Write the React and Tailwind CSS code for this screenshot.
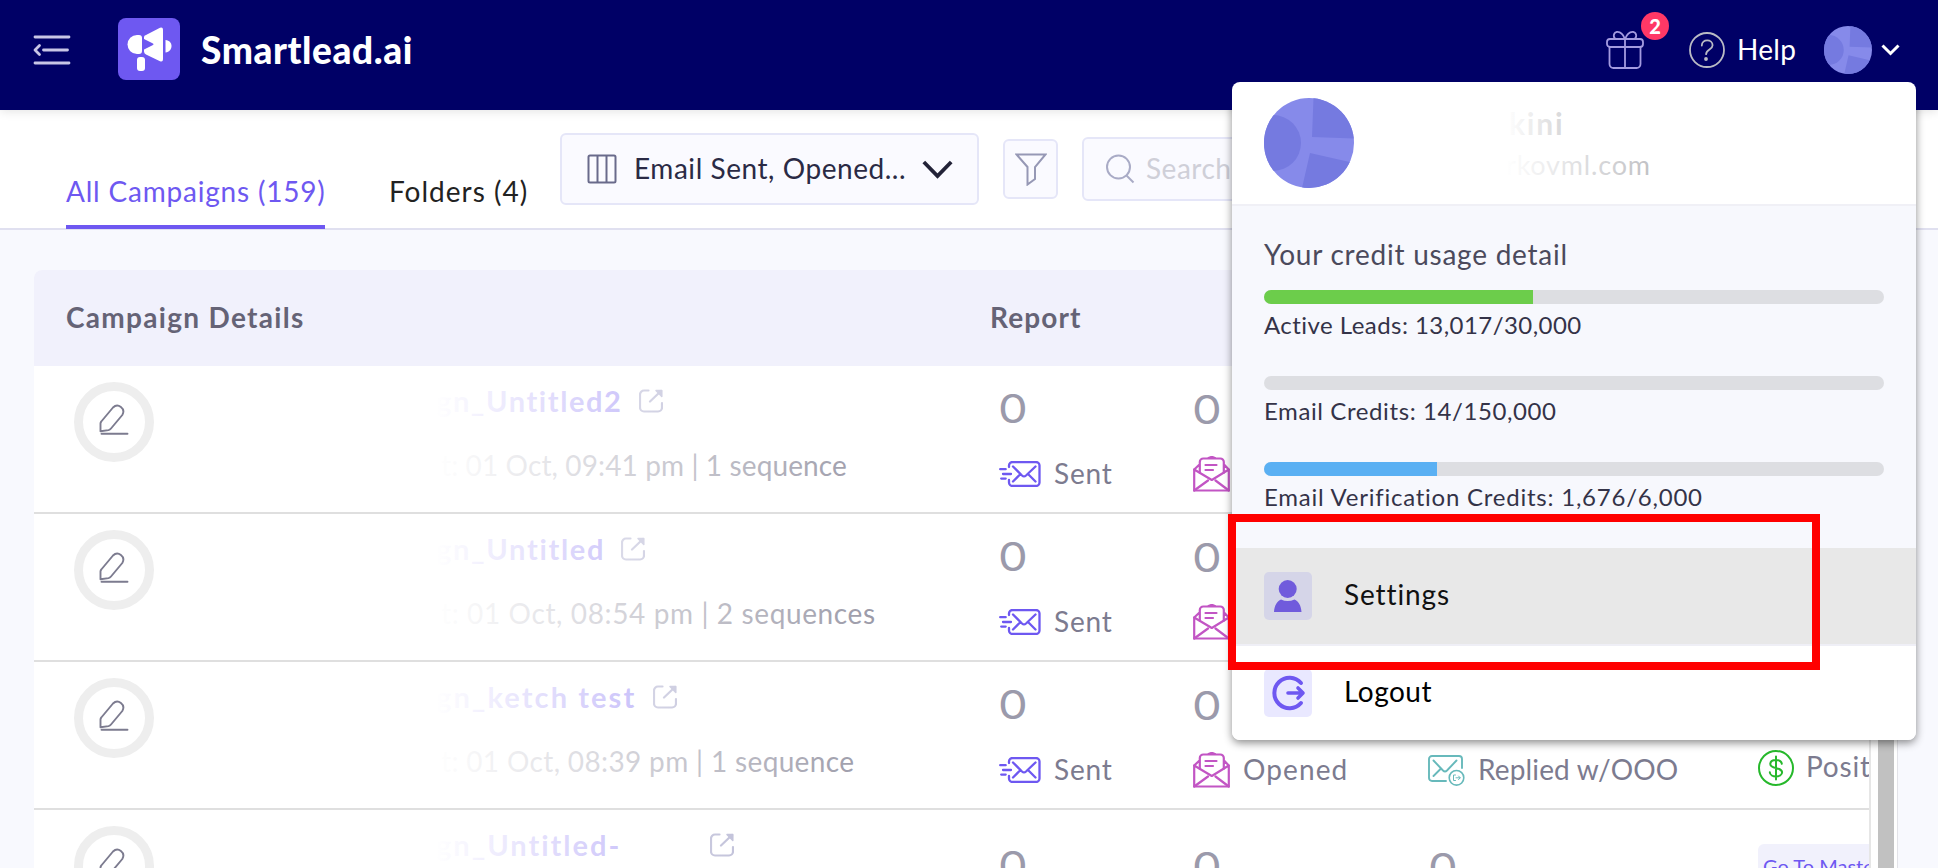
import { Fragment } from 'react'

/**
 * Campaigns - campaign list with the account menu open
 */

const CAMPAIGNS = [
  { name: 'gn_Untitled2', meta: 't: 01 Oct, 09:41 pm | 1 sequence', nameClass: 'w-[186px] tracking-[1.6px]', metaTracking: 'tracking-[0.12px]' },
  { name: 'gn_Untitled', meta: 't: 01 Oct, 08:54 pm | 2 sequences', nameClass: 'w-[168px] tracking-[1.7px]', metaTracking: 'tracking-[0.62px]' },
  { name: 'gn_ketch test', meta: 't: 01 Oct, 08:39 pm | 1 sequence', nameClass: 'w-[200px] tracking-[2.1px]', metaTracking: 'tracking-[0.35px]' },
  { name: 'gn_Untitled-', meta: '', nameClass: 'w-[257px] tracking-[2px]', metaTracking: '', master: true },
]

const CREDITS = [
  { label: 'Active Leads: 13,017/30,000', percent: 43.4, color: 'bg-[#6ccd4b]', tracking: 'tracking-[0.45px]' },
  { label: 'Email Credits: 14/150,000', percent: 0, color: 'bg-[#6e58f1]', tracking: 'tracking-[0.6px]' },
  { label: 'Email Verification Credits: 1,676/6,000', percent: 27.9, color: 'bg-[#5ab0f3]', tracking: 'tracking-[0.77px]' },
]

function MenuIcon() {
  return (
    <svg width="38" height="30" viewBox="0 0 38 30" fill="none" stroke="#c8c6e6" strokeWidth="2.8" strokeLinecap="round">
      <path d="M2 2h34M10.500 15h24M2 28h34" />
      <path d="M6.500 10.500 2 15l4.500 4.500" strokeLinejoin="round" />
    </svg>
  )
}

function LogoMark() {
  return (
    <svg width="62" height="62" viewBox="0 0 62 62">
      <rect width="62" height="62" rx="8" fill="#6e58f1" />
      <g fill="#fff">
        <path d="M19 17h2a3 3 0 0 1 3 3v13a3 3 0 0 1-3 3h-2a9.500 9.500 0 0 1 0-19z" />
        <path d="M28 17 42 9.800q3-1 3 2v29.500q0 3-3 2L28 36.500q-2-1-2-3v-2l9-4.500q1.200-.800 0-1.500L26 21v-2q0-1.300 2-2z" />
        <path d="M47.500 22c4 .500 6 3 6 6s-2 6-6 6.500z" />
        <rect x="19" y="39" width="8" height="14" rx="3" />
      </g>
    </svg>
  )
}

function GiftIcon() {
  return (
    <svg width="38" height="38" viewBox="0 0 38 38" fill="none" stroke="#a49be0" strokeWidth="1.800">
      <rect x="1" y="8" width="36" height="8" rx="3" />
      <path d="M3.500 16v17a4 4 0 0 0 4 4h23a4 4 0 0 0 4-4V16M19 8v29" />
      <path d="M19 8c-2-5-5.500-7.500-8.500-7C7 2 7 7 10 8M19 8c2-5 5.500-7.500 8.500-7 3.500 1 3.500 6 .500 7" />
    </svg>
  )
}

function HelpIcon() {
  return (
    <svg width="36" height="36" viewBox="0 0 36 36" fill="none" stroke="#b9bbc4" strokeWidth="1.800" strokeLinecap="round">
      <circle cx="18" cy="18" r="17" />
      <path d="M12.800 13.500c0-7 10.800-6.500 10.800-.300 0 4.500-6.500 4-6.500 9" />
      <circle cx="17" cy="27" r="1" fill="#b9bbc4" />
    </svg>
  )
}

function Avatar({ className, clip }) {
  return (
    <svg viewBox="0 0 90 90" className={className}>
      <clipPath id={clip}><circle cx="45" cy="45" r="45" /></clipPath>
      <g clipPath={`url(#${clip})`}>
        <rect width="90" height="90" fill="#868aea" />
        <g fill="#757ae0">
          <circle cx="9" cy="45" r="28" />
          <path d="M49.500 0 48 39l42 1.500V0zM46 55l44 10v25H38z" />
        </g>
      </g>
    </svg>
  )
}

function PencilIcon() {
  return (
    <svg width="30" height="33" viewBox="0 0 30 33" fill="none" stroke="#7c7b8f" strokeWidth="1.900" strokeLinejoin="round" strokeLinecap="round">
      <path d="M1.500 28.300v-7.800a3 3 0 0 1 .800-2L14 4.500c5-5 13 1 9.300 7.500L12 25.500q-1 1.300-2.500 1.600z" />
      <path d="M2.500 30.800h26" />
    </svg>
  )
}

function ExternalIcon() {
  return (
    <svg width="24" height="24" viewBox="0 0 24 24" fill="none" stroke="#8f8fbb" strokeWidth="2.200" strokeLinecap="round">
      <path d="M9.500 1.500H5a4 4 0 0 0-4 4V18.500a4 4 0 0 0 4 4H19a4 4 0 0 0 4-4v-4.500M11 12.500 22 2" />
      <path d="M17 1.500h5.800v6z" fill="#8f8fbb" strokeWidth="1.500" strokeLinejoin="round" />
    </svg>
  )
}

function SentIcon() {
  return (
    <svg width="42" height="26" viewBox="0 0 42 26" fill="none" stroke="#6e58f1" strokeWidth="2.300" strokeLinecap="round">
      <path d="M10 6V4.500a3.500 3.500 0 0 1 3.500-3.500H37a3.500 3.500 0 0 1 3.500 3.500v17A3.500 3.500 0 0 1 37 25H13.500a3.500 3.500 0 0 1-3.500-3.500V19" />
      <path d="M14 5.500 23 14.500q2 1.800 4 0L36.500 5.500M14 20.500l7-7M36.500 20.500l-7-7M1.200 8.200h5.500M4 13h8M2.200 17.600h4.500" />
    </svg>
  )
}

function OpenedIcon() {
  return (
    <svg width="37" height="36" viewBox="0 0 37 36" fill="none" stroke="#c255c4" strokeWidth="2.200" strokeLinejoin="round" strokeLinecap="round">
      <path d="M1.200 13.500v21h34.600v-21L18.800 24z" />
      <path d="M1.200 34.500 15 24.500M35.800 34.500 22.500 24.500" />
      <path d="M6.800 16.800V6a3.500 3.500 0 0 1 3.500-3.500h17A3.500 3.500 0 0 1 30.800 6v10.800M6.500 8.500 1.200 13.500M31 8.500l4.800 5M15.500 2l3.300-1.200L22 2M12.500 9h11M12.500 14h7.500" />
    </svg>
  )
}

function RepliedIcon() {
  return (
    <svg width="37" height="31" viewBox="0 0 37 31" fill="none" stroke="#67b9bb" strokeWidth="1.900" strokeLinecap="round">
      <path d="M18 26H4a3 3 0 0 1-3-3V4a3 3 0 0 1 3-3h27a3 3 0 0 1 3 3v9" />
      <path d="M5.500 5.500 15 15.500q2 1.800 4 0L28.500 5.500M5.500 21l7-7" />
      <circle cx="28.500" cy="22.800" r="7.300" strokeWidth="1.600" />
      <path d="M27.500 20h-2v5.500h2M28 22.800h4M30.500 21l1.800 1.800-1.800 1.800" strokeWidth="1" />
    </svg>
  )
}

function DollarIcon() {
  return (
    <svg className="shrink-0" width="36" height="36" viewBox="0 0 36 36" fill="none" stroke="#26b82b" strokeWidth="2" strokeLinecap="round">
      <circle cx="18" cy="18" r="17" />
      <path d="M23.800 13.800c-.500-5-11.500-5-11.500.300 0 5.500 11.800 2.500 11.800 8.200 0 5.500-12 5.500-12.300 0M18 6.500v23" />
    </svg>
  )
}

const STATS = [
  { label: 'Sent', icon: SentIcon, cell: 'pl-[1px]', valueClass: 'pt-[21px] h-[64px] -ml-[1px]', labelClass: 'ml-[13px] tracking-[0.8px]' },
  { label: 'Opened', icon: OpenedIcon, cell: '', valueClass: 'pt-[22px] h-[64px] -ml-[1px]', labelClass: 'ml-[13px] tracking-[1.1px]' },
  { label: 'Replied w/OOO', icon: RepliedIcon, cell: '', valueClass: 'pt-[23px] h-[64px]', labelClass: 'ml-[13px] tracking-[0.15px]' },
]

function CampaignRow({ campaign }) {
  return (
    <div className="relative grid h-[148px] shrink-0 grid-cols-[402px_562px_195px_235px_329px_112px] border-b-2 border-[#dfdfdf]">
      <div className="pt-[16px] pl-[40px]">
        <div className="flex h-[80px] w-[80px] justify-center rounded-full border-[9px] border-[#eeeeee] pt-[12px]">
          <PencilIcon />
        </div>
      </div>

      <div className="relative pt-[17px]">
        <div className="flex h-[36px] items-center">
          <span className={`${campaign.nameClass} text-[29px] leading-[36px] font-bold whitespace-nowrap text-[#6e58f1]`}>
            {campaign.name}
          </span>
          <span className="ml-[17px]"><ExternalIcon /></span>
        </div>
        <p className={`mt-[28px] ml-[5px] text-[28px] leading-[36px] whitespace-nowrap text-[#7f7e90] ${campaign.metaTracking}`}>
          {campaign.meta}
        </p>
        {/* Fade over the left part of the cell */}
        <div className="pointer-events-none absolute inset-0 bg-linear-to-r from-white to-white/0" />
      </div>

      {STATS.map(({ label, icon: Icon, cell, valueClass, labelClass }) => (
        <div key={label} className={`${cell} ${campaign.master ? 'pt-[13px]' : ''}`}>
          <p className={`${valueClass} w-[40px] origin-left scale-x-[1.18] font-[Inter] text-[40px] leading-[44px] text-[#9b9aab]`}>0</p>
          {!campaign.master && (
            <div className="mt-[26px] flex h-[36px] items-center">
              <Icon />
              <span className={`${labelClass} pb-[2px] text-[28px] leading-[36px] whitespace-nowrap text-[#7c7b8f]`}>{label}</span>
            </div>
          )}
        </div>
      ))}

      <div className="overflow-hidden pl-px">
        {campaign.master ? (
          <div className="mt-[34px] h-[60px] w-[180px] rounded-[6px] bg-[#f1f1fc] pt-[8px] pl-[5px] text-[20px] leading-[28px] whitespace-nowrap text-[#6e58f1]">
            Go To Master
          </div>
        ) : (
          <div className="mt-[88px] flex h-[36px] items-center">
            <DollarIcon />
            <span className="ml-[12px] pb-[4px] text-[28px] leading-[36px] tracking-[0.8px] whitespace-nowrap text-[#7c7b8f]">Positive</span>
          </div>
        )}
      </div>
    </div>
  )
}

function AccountMenu() {
  return (
    <div className="absolute top-[82px] right-[22px] h-[658px] w-[684px] overflow-hidden rounded-[8px] bg-white">
      <div className="flex h-[124px] items-center border-b-2 border-[#f0f0f6] pl-[32px]">
        <Avatar className="h-[90px] w-[90px]" clip="avatar-large" />
        <div className="relative ml-[152px] w-[160px] self-start">
          <p className="mt-[23px] ml-[3px] text-[30px] leading-[36px] font-bold tracking-[1.8px] text-[#4a4a4f]">kini</p>
          <p className="mt-[6px] text-[27px] leading-[36px] tracking-[0.8px] text-[#8d8d93]">rkovml.com</p>
          <div className="pointer-events-none absolute inset-0 bg-linear-to-r from-white to-white/40" />
        </div>
      </div>

      {/* Credit usage */}
      <div className="h-[342px] bg-[#f7f8fd] px-[32px] pt-[30px]">
        <p className="text-[28px] leading-[36px] tracking-[0.76px] text-[#4b4a5c]">Your credit usage detail</p>
        {CREDITS.map((credit, i) => (
          <Fragment key={credit.label}>
            <div className={`${i === 0 ? 'mt-[18px]' : 'mt-[38px]'} h-[14px] overflow-hidden rounded-full bg-[#dddee2]`}>
              <div className={`h-full ${credit.color}`} style={{ width: `${credit.percent}%` }} />
            </div>
            <p className={`mt-[6px] h-[28px] text-[24px] leading-[29px] whitespace-nowrap text-[#343348] ${credit.tracking}`}>
              {credit.label}
            </p>
          </Fragment>
        ))}
      </div>

      <div className="flex h-[98px] items-center border-b-2 border-[#efeff6] bg-[#e8e8e8] pl-[32px]">
        <svg width="48" height="48" viewBox="0 0 48 48">
          <rect width="48" height="48" rx="5" fill="#d5d5e8" />
          <g fill="#705bdc">
            <ellipse cx="23.700" cy="17" rx="9" ry="9" />
            <path d="M10 40c.500-7 3-10.500 7-12.500q6.500 3 13.500 0c4 2 6.500 5.500 7 12.500z" />
          </g>
        </svg>
        <span className="ml-[32px] pb-[4px] text-[28px] leading-[36px] tracking-[0.9px] text-[#111]">Settings</span>
      </div>
      <div className="flex h-[94px] items-center pl-[32px]">
        <svg width="48" height="48" viewBox="0 0 48 48" fill="none" stroke="#6e58f1" strokeWidth="4" strokeLinecap="round">
          <rect width="48" height="48" rx="5" fill="#e9e8ff" stroke="none" />
          <path d="M37 14a15.200 15.200 0 1 0 0 20" />
          <path d="M24 24h14M34 19l5 5-5 5" strokeWidth="3.600" strokeLinejoin="round" />
        </svg>
        <span className="ml-[32px] pb-[4px] text-[28px] leading-[36px] tracking-[0.5px] text-black">Logout</span>
      </div>
    </div>
  )
}

export default function App() {
  return (
    <div className="relative flex h-[868px] w-full flex-col overflow-hidden bg-[#f8f9fe] font-['Lato',sans-serif]">
      {/* Top bar */}
      <header className="z-10 flex h-[110px] shrink-0 items-center bg-[#000066] pr-[38px] pb-[10px] pl-[33px] shadow-[0_1px_10px_rgba(0,0,0,0.12)]">
        <MenuIcon />
        <span className="mb-[2px] ml-[47px]"><LogoMark /></span>
        <span className="ml-[21px] text-[37px] leading-[44px] font-black tracking-[0.6px] text-white">Smartlead.ai</span>
        <div className="relative ml-auto">
          <GiftIcon />
          <span className="absolute -top-[19px] left-[35px] flex h-[28px] w-[28px] items-center justify-center rounded-full bg-[#ff3866] text-[20px] leading-none font-black text-white">
            2
          </span>
        </div>
        <span className="ml-[45px]"><HelpIcon /></span>
        <span className="ml-[12px] w-[60px] pb-[2px] text-[28px] leading-[36px] tracking-[0.3px] text-white">Help</span>
        <Avatar className="ml-[27px] h-[48px] w-[48px]" clip="avatar-small" />
        <svg className="ml-[9px]" width="19" height="12" viewBox="0 0 19 12" fill="none" stroke="#fff" strokeWidth="3">
          <path d="m1.500 1.500 8 8 8-8" />
        </svg>
      </header>

      {/* Tabs and filters */}
      <div className="flex h-[120px] shrink-0 items-start border-b-2 border-[#e0e0f0] bg-white pl-[66px]">
        <div className="flex h-[119px] w-[259px] items-end border-b-4 border-[#6e58f1] pb-[17px] text-[28px] leading-[34px] tracking-[0.8px] whitespace-nowrap text-[#6e58f1]">
          All Campaigns (159)
        </div>
        <div className="ml-[64px] flex h-[115px] w-[139px] items-end pb-[17px] text-[28px] leading-[34px] tracking-[1px] whitespace-nowrap text-[#222]">
          Folders (4)
        </div>
        <div className="mt-[23px] ml-[32px] flex h-[72px] w-[419px] items-center rounded-[6px] border-2 border-[#e5e6f8] bg-[#fafaff] pl-[25px]">
          <svg width="30" height="30" viewBox="0 0 30 30" fill="none" stroke="#696a8b" strokeWidth="2">
            <rect x="1.500" y="1.500" width="27" height="27" rx="1.500" />
            <path d="M10.500 1v28M19.500 1v28" />
          </svg>
          <span className="ml-[17px] w-[271px] pb-[2px] text-[28px] leading-[36px] tracking-[0.55px] whitespace-nowrap text-[#2a2a45]">
            Email Sent, Opened...
          </span>
          <svg className="ml-[17px]" width="31" height="19" viewBox="0 0 31 19" fill="none" stroke="#222238" strokeWidth="3.800">
            <path d="m1.800 2 13.700 14L29.200 2" />
          </svg>
        </div>
        <div className="mt-[29px] ml-[24px] flex h-[60px] w-[55px] items-center justify-center rounded-[6px] border-2 border-[#e5e6f8] bg-[#fafaff]">
          <svg width="32" height="33" viewBox="0 0 32 33" fill="none" stroke="#9698b5" strokeWidth="2">
            <path d="M1.500 1.500h29L20 14v12l-7.500 5.500V14z" />
          </svg>
        </div>
        <div className="mt-[27px] ml-[24px] flex h-[64px] w-[400px] items-center rounded-[6px] border-2 border-[#e5e6f8] bg-[#fafaff] pl-[22px]">
          <svg width="29" height="30" viewBox="0 0 29 30" fill="none" stroke="#a9abc6" strokeWidth="2">
            <circle cx="12.500" cy="13" r="11.500" />
            <path d="m20.500 21.500 7 7" />
          </svg>
          <span className="ml-[11px] pb-[2px] text-[28px] leading-[36px] tracking-[0.5px] text-[#cfcfd8]">Search</span>
        </div>
      </div>

      {/* Campaign table */}
      <div className="mt-[40px] ml-[34px] flex w-[1864px] grow overflow-hidden rounded-tl-[8px] border-r border-[#e3e3e8] bg-white">
        <div className="flex w-[1837px] shrink-0 flex-col overflow-hidden border-r-2 border-[#e6e6e6]">
          <div className="flex h-[96px] shrink-0 items-center bg-[#f1f1fc] pb-[2px] text-[28px] leading-[36px] font-bold text-[#656376]">
            <span className="w-[924px] pl-[32px] tracking-[1.3px]">Campaign Details</span>
            <span className="pl-[32px] tracking-[1.1px]">Report</span>
          </div>
          {CAMPAIGNS.map((campaign) => (
            <CampaignRow key={campaign.name} campaign={campaign} />
          ))}
        </div>
        <div className="ml-[7px] w-[16px] shrink-0 bg-[#c1c1c1]" />
      </div>

      <div className="absolute top-[82px] right-[22px] h-[658px] w-[684px] rounded-[8px] shadow-[0_3px_9px_rgba(0,0,0,0.45)]" />
      <div className="absolute inset-0 z-20">
        <AccountMenu />
        <div className="absolute top-[514px] left-[1228px] h-[156px] w-[592px] border-8 border-[#ff0000]" />
      </div>
    </div>
  )
}
